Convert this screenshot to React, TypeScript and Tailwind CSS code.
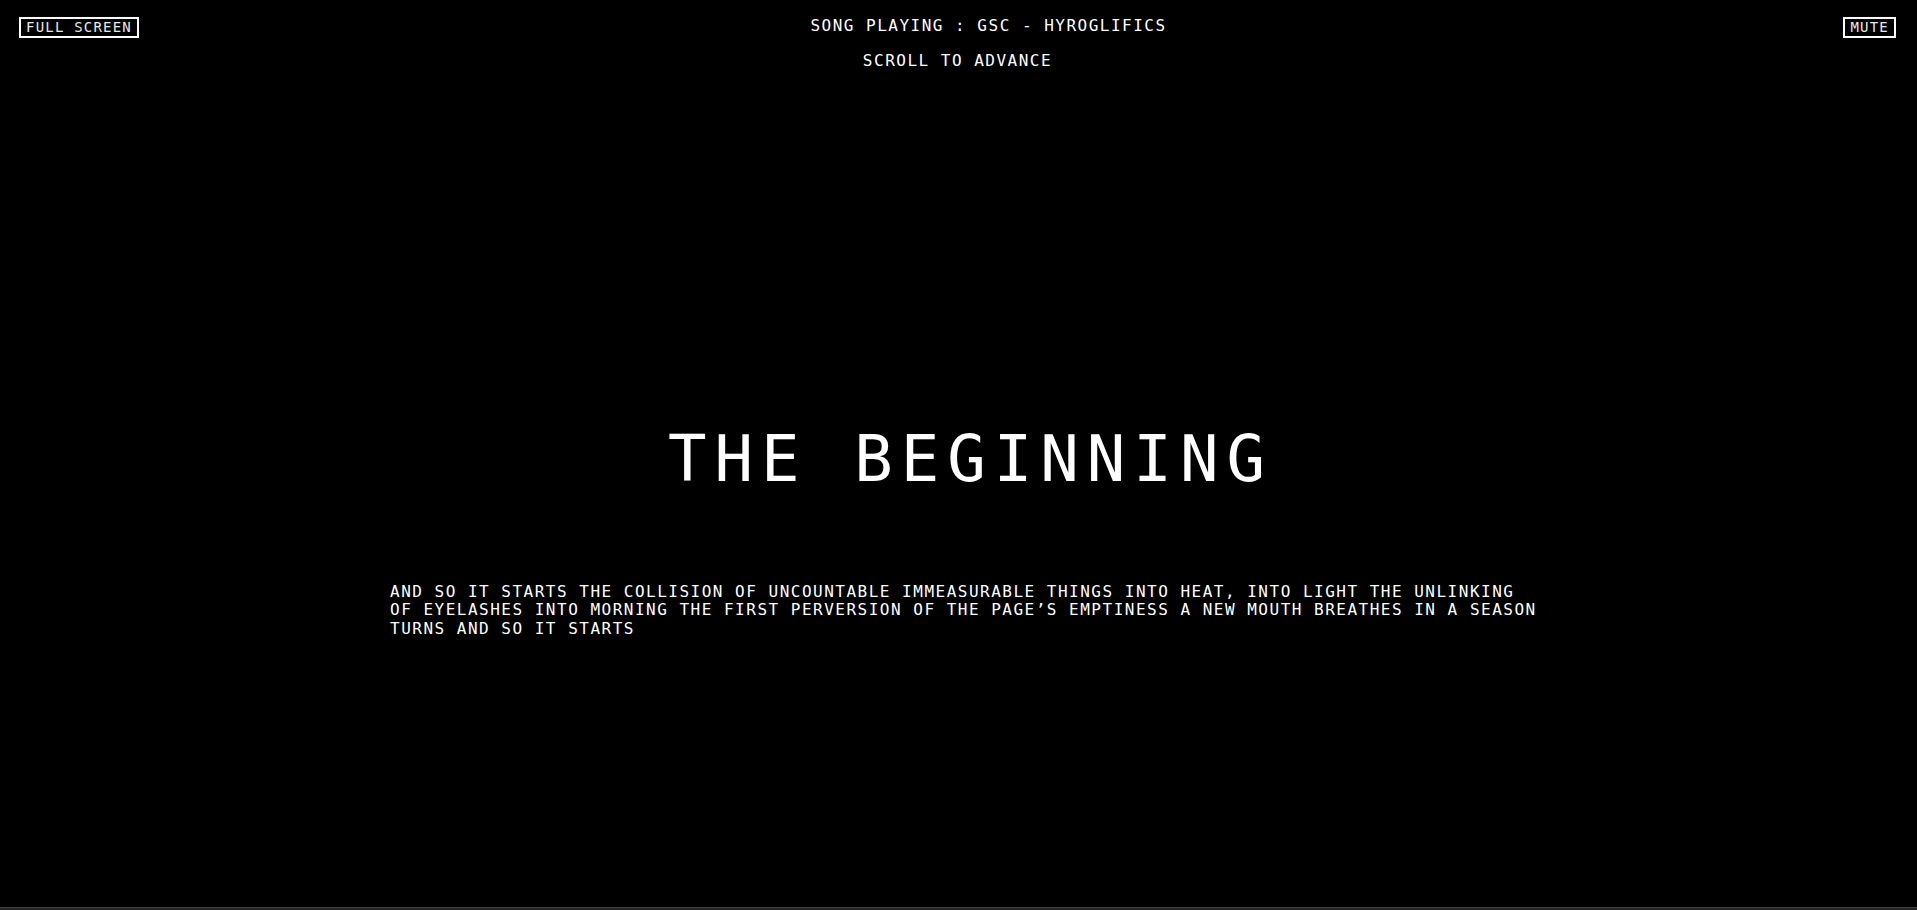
import React from "react";

const mono = { fontFamily: '"DejaVu Sans Mono", "Liberation Mono", monospace' };

export default function App() {
  return (
    <div className="flex h-[910px] w-full flex-col overflow-hidden bg-black text-white" style={mono}>
      <div className="relative flex-1">
        {/* top bar */}
        <div className="grid grid-cols-[1fr_auto_1fr] items-start pl-[19px] pr-[21px] pt-[17px]">
          <button className="flex h-[21px] items-center justify-self-start border-2 border-white px-[5px] text-[14px] leading-[17px] tracking-[1.2px] text-[#e8e8e8]">
            FULL SCREEN
          </button>
          <div className="flex flex-col items-center">
            <div className="pl-[62px] text-[16px] leading-[18px] tracking-[1.5px] whitespace-nowrap">
              SONG PLAYING : GSC - HYROGLIFICS
            </div>
            <div className="mt-[17px] text-[16px] leading-[18px] tracking-[1.5px] whitespace-nowrap">
              SCROLL TO ADVANCE
            </div>
          </div>
          <button className="flex h-[21px] items-center justify-self-end border-2 border-white px-[5px] text-[14px] leading-[17px] tracking-[1.2px] text-[#e8e8e8]">
            MUTE
          </button>
        </div>

        {/* title */}
        <h1 className="mt-[357px] pl-[24px] text-center text-[64px] leading-[64px] font-normal tracking-[8px] whitespace-nowrap">
          THE BEGINNING
        </h1>

        {/* paragraph */}
        <p className="ml-[390px] mt-[92px] w-[1150px] text-[16px] leading-[18.4px] tracking-[1.5px]">
          AND SO IT STARTS THE COLLISION OF UNCOUNTABLE IMMEASURABLE THINGS INTO HEAT, INTO LIGHT THE UNLINKING OF EYELASHES INTO MORNING THE FIRST PERVERSION OF THE PAGE’S EMPTINESS A NEW MOUTH BREATHES IN A SEASON TURNS AND SO IT STARTS
        </p>
      </div>
      <div className="h-[3px] border-t border-[#3d3d3d] bg-[#262626]" />
    </div>
  );
}
